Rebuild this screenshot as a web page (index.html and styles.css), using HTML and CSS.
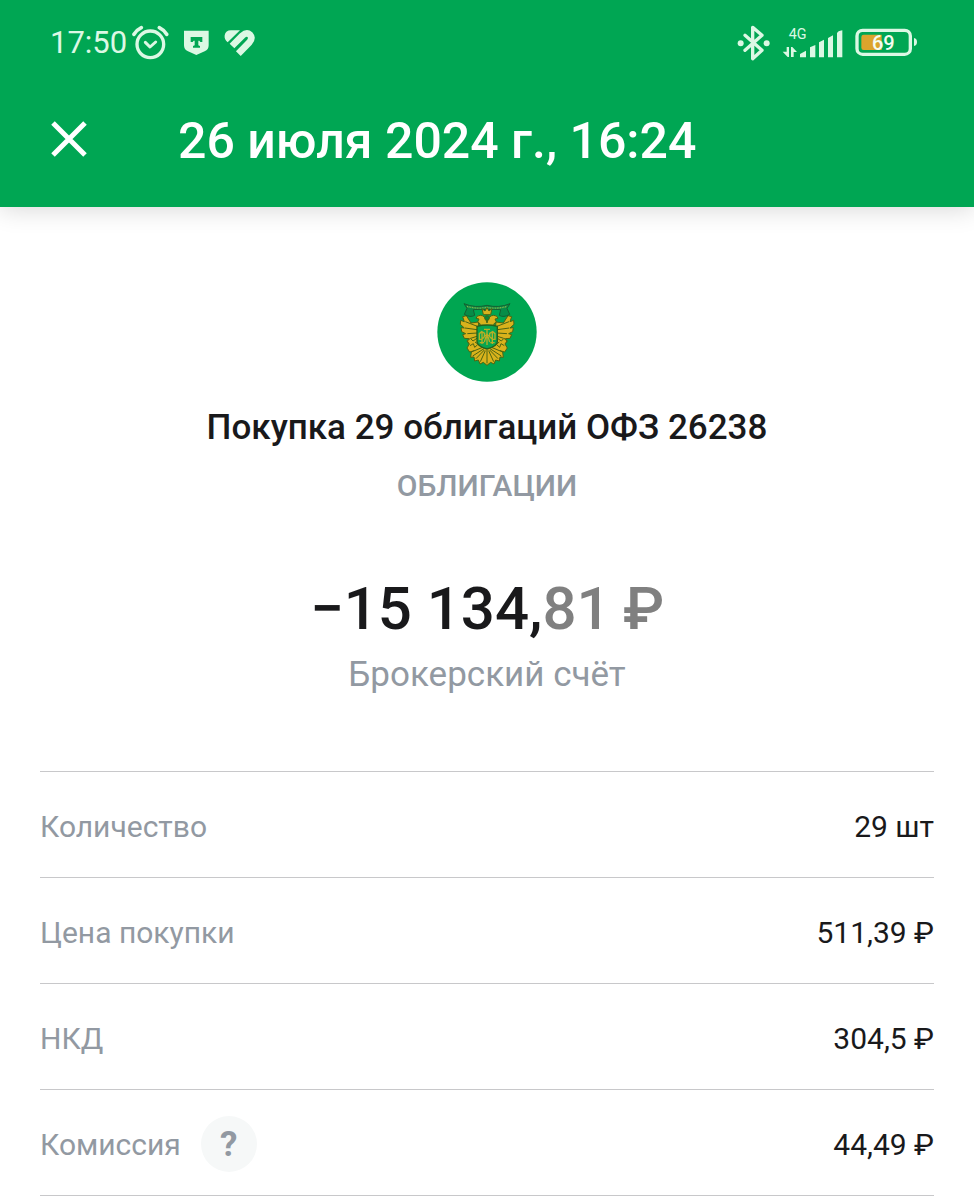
FILE: index.html
```
<!DOCTYPE html>
<html lang="ru">
  <head>
    <meta charset="UTF-8" />
    <meta name="viewport" content="width=device-width, initial-scale=1.0" />
    <title>Покупка облигаций</title>
    <link rel="stylesheet" href="styles.css">
  </head>

  <body>
    <header class="header">
      <div class="status_bar">
        <div class="status_left">
          <span class="time">17:50</span>
          <svg class="icon_alarm" width="37" height="36" viewBox="276 43 111 108" fill="none" stroke="#dcf8e4" stroke-linecap="round" stroke-linejoin="round">
            <circle cx="331" cy="101" r="40" stroke-width="10" />
            <path d="M316 95l14 14 17-15" stroke-width="9" />
            <path d="M282 71q9-14 22-20M380 71q-9-14-22-20" stroke-width="11" />
          </svg>
          <svg class="icon_shield" width="25" height="26" viewBox="433 64 75 78">
            <path d="M433 66h74v44q0 13-12 18l-25 11-25-11q-12-5-12-18z" fill="#dcf8e4" />
            <path d="M453 85h35v15h-6l-3-4h-3v14l5 2v5h-21v-5l5-2V96h-3l-3 4h-6z" fill="#00a653" />
          </svg>
          <svg class="icon_heart" width="32" height="28" viewBox="558 55 96 84">
            <path d="M569 95q-11-9-9-21 3-15 19-15 14-1 27 0z" fill="#dcf8e4" />
            <path d="M582 106L613 75q13-12 23-3 9 10-2 23L601 129" fill="none" stroke="#dcf8e4" stroke-width="20" stroke-linejoin="round" />
          </svg>
        </div>
        <div class="status_right">
          <svg class="icon_bluetooth" width="34" height="36" viewBox="25 42 102 108" fill="none" stroke="#dcf8e4" stroke-width="10" stroke-linejoin="round" stroke-linecap="round">
            <path d="M49 73l51 45-28 25V49l28 24-51 45" />
            <circle cx="36" cy="97" r="9" fill="#dcf8e4" stroke="none" />
            <circle cx="114" cy="97" r="9" fill="#dcf8e4" stroke="none" />
          </svg>
          <svg class="icon_signal" width="62" height="32" viewBox="157 48 186 96" fill="#dcf8e4">
            <text x="177" y="84" font-size="43">4G</text>
            <path d="M171 108h7v30h-4l-15-16h12zM184 138v-30h4l14 15h-10v15z" />
            <path d="M211 139v-10l18-10v20zM241 139v-30l16-7v37zM268 139V94l15-8v53zM295 139V81l15-8v66zM322 139V67q2-7 16-9v81z" />
          </svg>
          <svg class="icon_battery" width="63" height="30" viewBox="376 54 189 90">
            <rect x="382" y="61" width="160" height="72" rx="17" fill="none" stroke="#dcf8e4" stroke-width="10" />
            <path d="M553 84q9 2 9 12t-9 12z" fill="#dcf8e4" />
            <path d="M402 74h54v46h-54q-7 0-7-7V81q0-7 7-7z" fill="#dca42c" />
            <text x="461" y="120" font-size="60" font-weight="500" text-anchor="middle" fill="#f4fdf0">69</text>
          </svg>
        </div>
      </div>
      <div class="title_bar">
        <button type="button" class="close_btn" aria-label="Закрыть">
          <svg width="38" height="38" viewBox="0 0 38 38" fill="none" stroke="#fff" stroke-width="5">
            <path d="M3 3l32 32M35 3L3 35" />
          </svg>
        </button>
        <h1>26 июля 2024 г., 16:24</h1>
      </div>
    </header>

    <main class="container">
      <section class="summary">
        <svg class="logo" width="100" height="100" viewBox="22 20 300 300">
          <circle cx="172" cy="170" r="149" fill="#00a651" />
          <!-- wings -->
          <g fill="#d9b21c" stroke="#4d6412" stroke-width="3">
            <path d="M146 140l-22 3-14-22-11 3 5 15-11-4-1 12 12 11-10-1 2 12 12 6-9 3 5 11 14 1-6 7 7 9 13-3-1 9 13 3 8-10z" />
            <path d="M143 153l-36-14M142 163l-36-5M143 173l-30 2M145 182l-22 7" fill="none" />
            <path d="M143 188l-13 9-8-8-9 8 6 9-7 12 8 12 14-4 8 8 13-5 6-10z" />
            <path d="M121 211l10-6 4 11 9-8M136 200l7 5" fill="none" />
          </g>
          <g transform="matrix(-1 0 0 1 345 0)" fill="#d9b21c" stroke="#4d6412" stroke-width="3">
            <path d="M146 140l-22 3-14-22-11 3 5 15-11-4-1 12 12 11-10-1 2 12 12 6-9 3 5 11 14 1-6 7 7 9 13-3-1 9 13 3 8-10z" />
            <path d="M143 153l-36-14M142 163l-36-5M143 173l-30 2M145 182l-22 7" fill="none" />
            <path d="M143 188l-13 9-8-8-9 8 6 9-7 12 8 12 14-4 8 8 13-5 6-10z" />
            <path d="M121 211l10-6 4 11 9-8M136 200l7 5" fill="none" />
          </g>
          <!-- ribbon -->
          <path d="M103 85q34 14 69 5 35 9 69-5l-9 14 8 18q-18 11-31 3l4-17q-20-2-41 0-21-2-41 0l4 17q-13 8-31-3l8-18z" fill="#078c48" stroke="#155f31" stroke-width="3" />
          <path d="M112 93q30 9 60 3 30 6 60-3" fill="none" stroke="#8eb447" stroke-width="4" stroke-dasharray="3 2" />
          <!-- heads and crown -->
          <g fill="#d9b21c" stroke="#4d6412" stroke-width="3">
            <path d="M172 143q-4-23-20-23-11 0-13 9l9 2-4 9 8 6-5 9h50l-5-9 8-6-4-9 9-2q-2-9-13-9-16 0-20 23z" />
            <path d="M161 118l-4-18 9 7 6-10 6 10 9-7-4 18z" />
            <circle cx="172" cy="128" r="7" fill="#09883a" />
          </g>
          <!-- tail -->
          <g fill="#d9b21c" stroke="#4d6412" stroke-width="3">
            <path d="M161 215l-36 15-2 16 10-1 2 12 11-3 5 12 10-5 11 9 11-9 10 5 5-12 11 3 2-12 10 1-2-16-36-15z" />
            <path d="M163 220l-34 22M164 224l-25 26M167 226l-15 33M172 224v40M177 226l15 33M180 224l25 26M181 220l34 22" fill="none" />
          </g>
          <!-- shield -->
          <path d="M142 153q30-8 61 0v46q0 13-31 22-30-9-30-22z" fill="#07a54f" stroke="#265f1d" stroke-width="4" />
          <path d="M172 160v49M163 162h18M165 174l-9-5-7 6v17h8l7-8zM180 174l9-5 7 6v17h-8l-8-8zM157 170v36M188 170v36M163 180h19M150 202h13M182 202h13M172 174l-8 26M172 174l8 26" fill="none" stroke="#b9ae25" stroke-width="4" />
        </svg>
        <h2>Покупка 29 облигаций ОФЗ 26238</h2>
        <p class="category">ОБЛИГАЦИИ</p>
        <p class="amount">−15 134,<span class="cents">81&thinsp;₽</span></p>
        <p class="account">Брокерский счёт</p>
      </section>

      <dl class="details">
        <div class="row">
          <dt>Количество</dt>
          <dd>29 шт</dd>
        </div>
        <div class="row">
          <dt>Цена покупки</dt>
          <dd>511,39 ₽</dd>
        </div>
        <div class="row">
          <dt>НКД</dt>
          <dd>304,5 ₽</dd>
        </div>
        <div class="row">
          <dt>Комиссия <button type="button" class="help_btn" aria-label="О комиссии">?</button></dt>
          <dd>44,49 ₽</dd>
        </div>
      </dl>
    </main>
  </body>
</html>
```
FILE: styles.css
```
* {
  box-sizing: border-box;
}

body {
  margin: 0;
  color: #19191b;
  background-color: #fff;
  font-family: Roboto, sans-serif;
}

h1,
h2,
p,
dl,
dd {
  margin: 0;
}

svg {
  display: block;
  flex: none;
}

button {
  border: none;
  padding: 0;
  font-family: inherit;
  cursor: pointer;
}

.header {
  color: #fff;
  background-color: #00a653;
  padding: 23px 52px 34px 50px;
  box-shadow: 0 2px 24px rgba(0, 0, 0, 0.16);
}

.status_bar {
  display: flex;
  justify-content: space-between;
  height: 40px;
}

.status_left,
.status_right {
  display: flex;
  align-items: center;
  color: #dcf8e4;
}

.status_left {
  gap: 15px;
}

.status_right {
  gap: 11px;
  padding-right: 4px;
}

.time {
  font-size: 31px;
  line-height: 40px;
  margin-right: -10px;
}

.title_bar {
  display: flex;
  align-items: center;
  gap: 90px;
  margin-top: 42px;
}

.close_btn {
  background: none;
}

h1 {
  padding-top: 4px;
  font-size: 50px;
  line-height: 64px;
  font-weight: 500;
}

.container {
  padding: 75px 40px 0;
}

.summary {
  display: flex;
  flex-direction: column;
  align-items: center;
  text-align: center;
}

h2 {
  margin-top: 24px;
  font-size: 35px;
  line-height: 44px;
  font-weight: 500;
}

.category {
  margin-top: 16px;
  font-size: 30px;
  line-height: 40px;
  font-weight: 500;
  color: #9299a2;
}

.amount {
  margin-top: 67px;
  font-size: 60px;
  line-height: 72px;
  font-weight: 500;
}

.cents {
  color: #808080;
}

.account {
  margin-top: 8px;
  font-size: 35px;
  line-height: 44px;
  color: #9299a2;
}

.details {
  margin-top: 74px;
  border-top: 1px solid #c8c8ca;
}

.row {
  display: flex;
  justify-content: space-between;
  align-items: center;
  height: 106px;
  padding-top: 3px;
  border-bottom: 1px solid #c8c8ca;
  font-size: 30px;
}

dt {
  display: flex;
  align-items: center;
  gap: 20px;
  color: #9299a2;
}

.help_btn {
  width: 56px;
  height: 56px;
  border-radius: 50%;
  background-color: #f6f8f8;
  color: #9299a2;
  font-size: 35px;
  font-weight: 700;
}
```
